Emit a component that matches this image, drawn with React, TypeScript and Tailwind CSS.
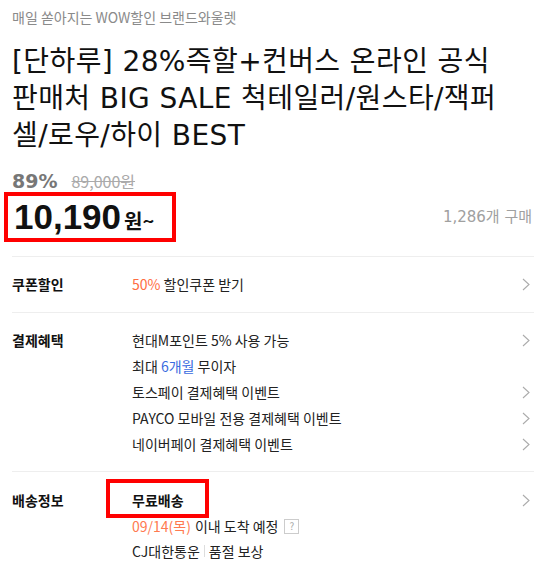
import React from "react";

const KR = { fontFamily: '"Noto Sans CJK KR", "Noto Sans", sans-serif' } as const;
const MIX = { fontFamily: '"DejaVu Sans", "Noto Sans CJK KR", sans-serif' } as const;

function Chevron() {
  return (
    <svg width="8" height="13" viewBox="0 0 8 13" className="shrink-0">
      <polyline points="1,1 7,6.5 1,12" fill="none" stroke="#ababab" strokeWidth="1.1" />
    </svg>
  );
}

function Line({ children, chevron = true }: { children: React.ReactNode; chevron?: boolean }) {
  return (
    <div className="flex items-center justify-between h-[26px] pr-[4px]">
      <div className="text-[14px] text-[#222] leading-[26px]">{children}</div>
      {chevron ? <Chevron /> : null}
    </div>
  );
}

export default function App() {
  return (
    <div className="w-[534px] h-[577px] bg-white overflow-hidden" style={KR}>
      <div className="pl-[12px]">
        <div className="pt-[7px] text-[14px] leading-[20px] text-[#8a8a8a]">매일 쏟아지는 WOW할인 브랜드와울렛</div>
        <div className="mt-[16px] text-[28px] leading-[37px] tracking-[0.4px] text-[#111]" style={MIX}>
          <div className="whitespace-nowrap">[단하루] 28%즉할+컨버스 온라인 공식</div>
          <div className="whitespace-nowrap">판매처 BIG SALE 척테일러/원스타/잭퍼</div>
          <div className="whitespace-nowrap">셀/로우/하이 BEST</div>
        </div>

        <div className="mt-[17px] flex items-center h-[20px] gap-[14px]">
          <span className="text-[19px] font-bold text-[#777] leading-[20px]" style={{ fontFamily: '"DejaVu Sans", sans-serif' }}>89%</span>
          <span className="text-[16px] text-[#aaa] line-through leading-[20px]">89,000원</span>
        </div>

        <div className="flex items-center justify-between h-[51px] pr-[2px]">
          <div className="relative flex items-baseline pl-[2px]">
            <span className="text-[35px] font-bold text-[#111] leading-[40px]" style={{ fontFamily: '"Liberation Sans", Arial, sans-serif' }}>10,190</span>
            <span className="ml-[3px] text-[20px] font-bold text-[#111] leading-[24px]">원~</span>
            <div className="absolute left-[-8px] top-[-5px] w-[172px] h-[50px] border-[4px] border-[#ff0000]" />
          </div>
          <span className="text-[15px] text-[#a0a0a0] pt-[2px]" style={MIX}>1,286개 구매</span>
        </div>

        <div className="mt-[14px] h-px bg-[#eeeeee]" />

        <div className="flex items-center h-[55px]">
          <div className="w-[120px] text-[14px] font-bold text-[#111]">쿠폰할인</div>
          <div className="flex-1 flex items-center justify-between pr-[4px]">
            <div className="text-[14px] text-[#222]">
              <span className="text-[#ff6d3f]">50%</span> 할인쿠폰 받기
            </div>
            <Chevron />
          </div>
        </div>

        <div className="h-px bg-[#eeeeee]" />

        <div className="flex pt-[14px] pb-[14px]">
          <div className="w-[120px] text-[14px] font-bold text-[#111] leading-[26px]">결제혜택</div>
          <div className="flex-1">
            <Line>현대M포인트 5% 사용 가능</Line>
            <Line chevron={false}>
              최대 <span className="text-[#3a6be0]">6개월</span> 무이자
            </Line>
            <Line>토스페이 결제혜택 이벤트</Line>
            <Line>PAYCO 모바일 전용 결제혜택 이벤트</Line>
            <Line>네이버페이 결제혜택 이벤트</Line>
          </div>
        </div>

        <div className="h-px bg-[#eeeeee]" />

        <div className="flex pt-[15px]">
          <div className="w-[120px] text-[14px] font-bold text-[#111] leading-[26px]">배송정보</div>
          <div className="flex-1">
            <div className="flex items-center justify-between h-[26px] pr-[4px]">
              <div className="relative text-[14px] font-bold text-[#111] leading-[26px]">
                무료배송
                <div className="absolute left-[-26px] top-[-8px] w-[103px] h-[39px] border-[4px] border-[#ff0000]" />
              </div>
              <Chevron />
            </div>
            <div className="flex items-center h-[26px] text-[14px] text-[#222] leading-[26px]">
              <span className="text-[#ff7a50]">09/14(목)</span>
              <span className="ml-[4px]">이내 도착 예정</span>
              <span className="ml-[6px] w-[15px] h-[15px] border border-[#cccccc] flex items-center justify-center text-[10px] text-[#aaa] leading-none">?</span>
            </div>
            <div className="flex items-center h-[24px] text-[14px] text-[#222] leading-[24px]">
              <span>CJ대한통운</span>
              <span className="mx-[4px] w-px h-[12px] bg-[#dddddd]" />
              <span>품절 보상</span>
            </div>
          </div>
        </div>
      </div>
    </div>
  );
}
